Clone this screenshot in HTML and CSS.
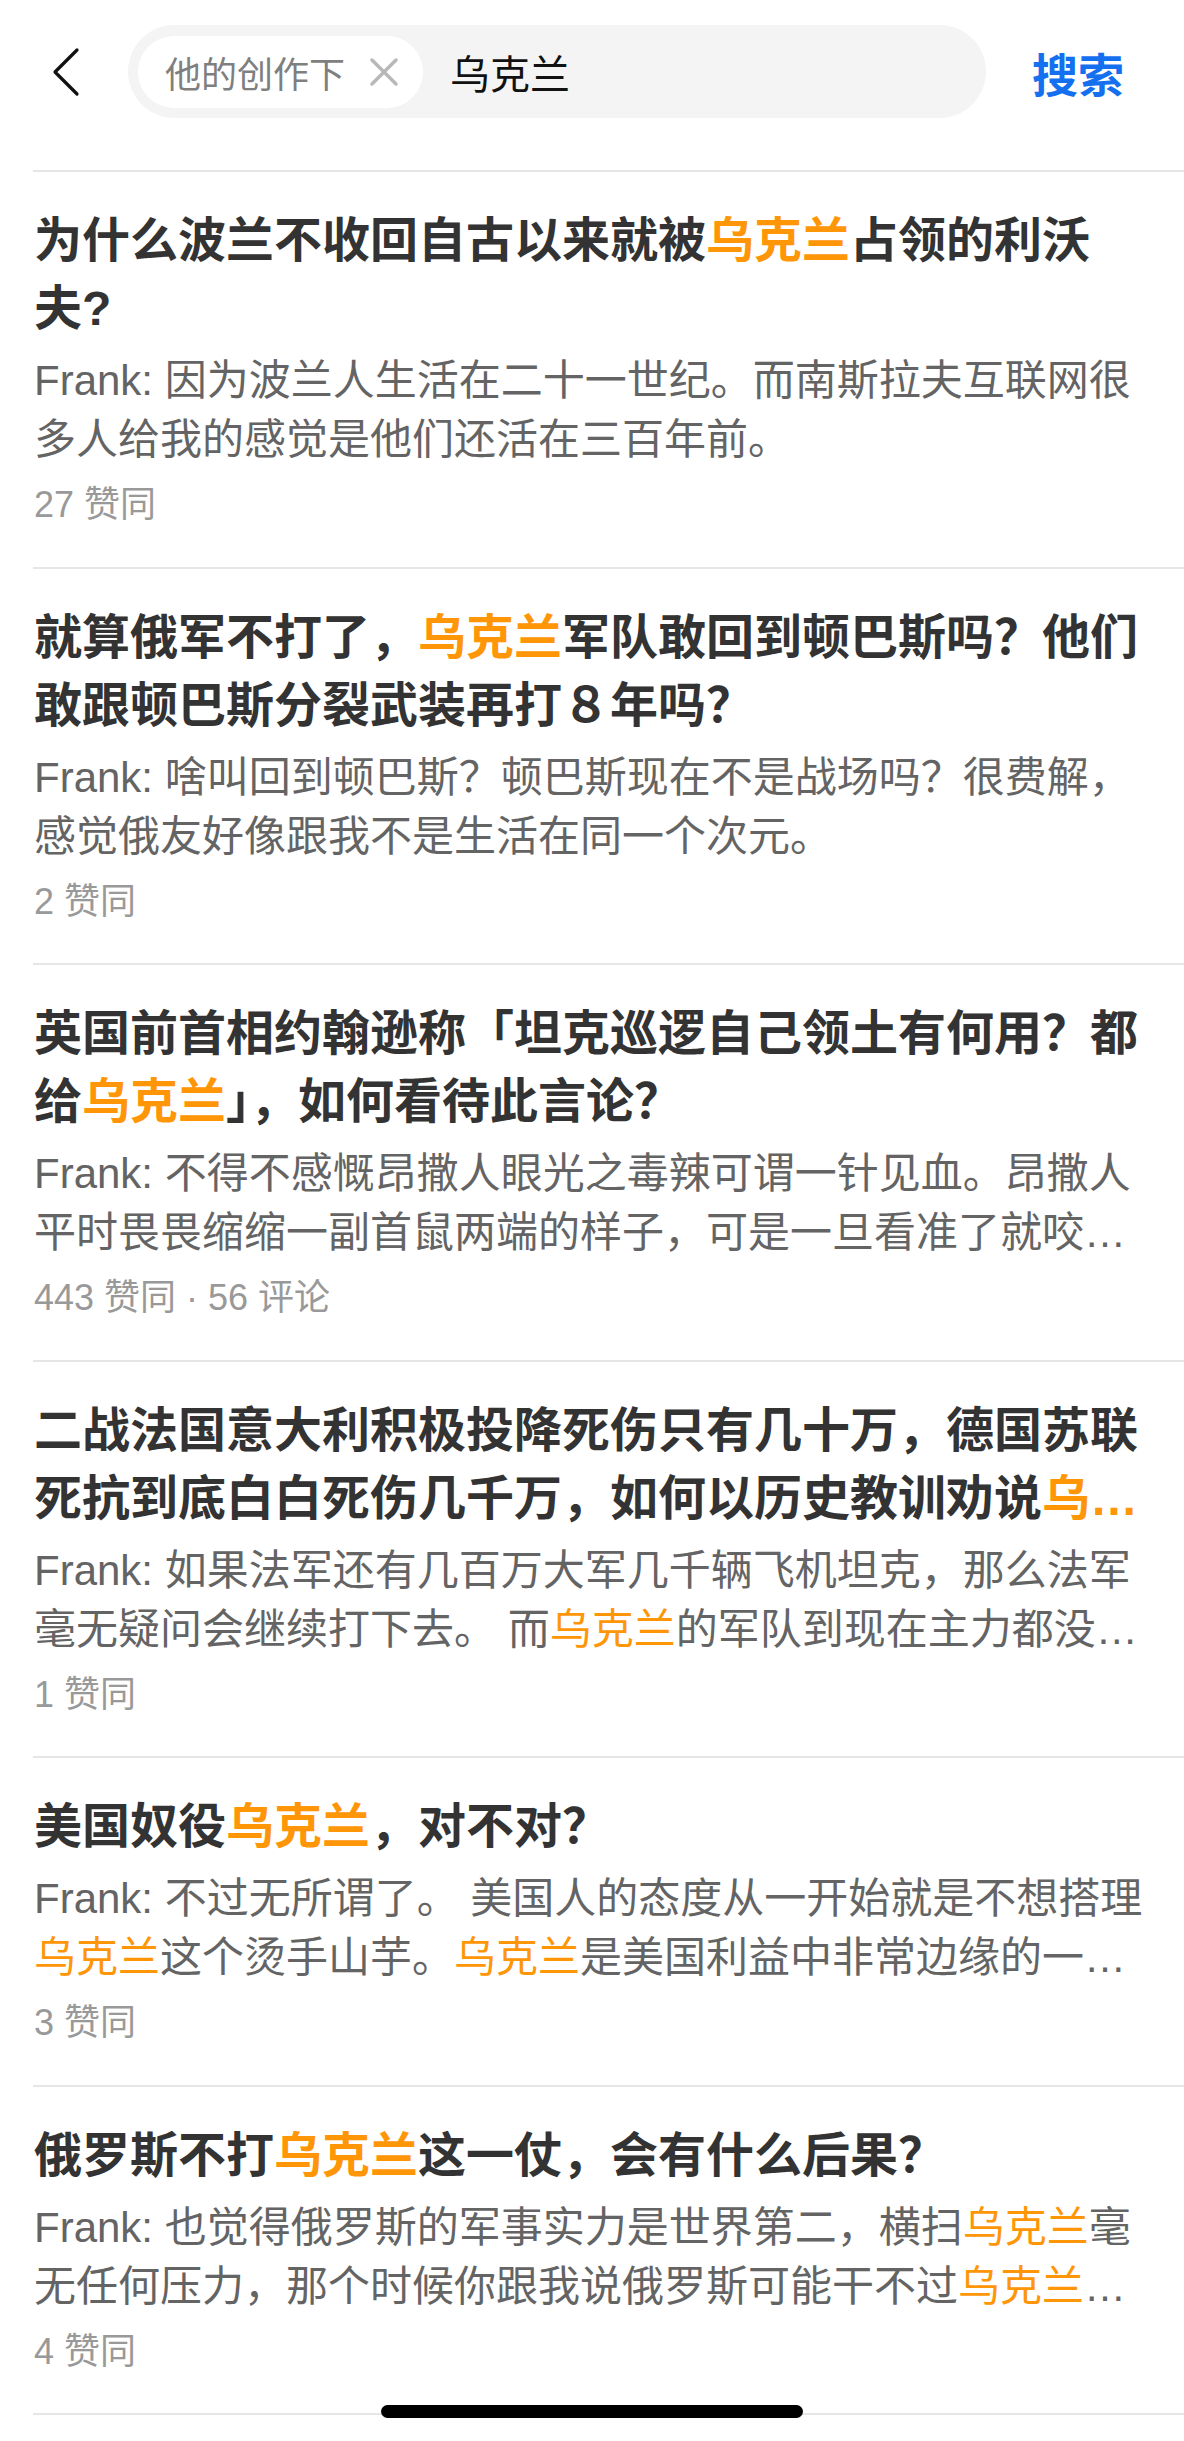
FILE: index.html
```html
<!DOCTYPE html>
<html lang="zh-CN">
<head>
<meta charset="utf-8">
<title>搜索</title>
<link rel="stylesheet" href="styles.css">
</head>
<body>
<div class="page">
  <header class="topbar">
    <div class="back">
      <svg width="28" height="50" viewBox="0 0 28 50"><path d="M25 3 L3 25 L25 47" fill="none" stroke="#111" stroke-width="3.2" stroke-linecap="round" stroke-linejoin="round"/></svg>
    </div>
    <div class="searchbox">
      <div class="chip">
        <span class="chip-text">他的创作下</span>
        <svg class="chip-x" width="28" height="28" viewBox="0 0 28 28"><path d="M2 2 L26 26 M26 2 L2 26" stroke="#b8b8b8" stroke-width="3.4" stroke-linecap="round"/></svg>
      </div>
      <span class="query">乌克兰</span>
    </div>
    <div class="search-btn">搜索</div>
  </header>

  <main class="list">
    <article class="item">
      <h2 class="title">为什么波兰不收回自古以来就被<span class="hl">乌克兰</span>占领的利沃夫?</h2>
      <p class="excerpt">Frank: 因为波兰人生活在二十一世纪。而南斯拉夫互联网很多人给我的感觉是他们还活在三百年前。</p>
      <div class="meta">27 赞同</div>
    </article>

    <article class="item">
      <h2 class="title">就算俄军不打了，<span class="hl">乌克兰</span>军队敢回到顿巴斯吗？他们敢跟顿巴斯分裂武装再打８年吗？</h2>
      <p class="excerpt">Frank: 啥叫回到顿巴斯？顿巴斯现在不是战场吗？很费解，感觉俄友好像跟我不是生活在同一个次元。</p>
      <div class="meta">2 赞同</div>
    </article>

    <article class="item">
      <h2 class="title">英国前首相约翰逊称「坦克巡逻自己领土有何用？都给<span class="hl">乌克兰</span>」，如何看待此言论？</h2>
      <p class="excerpt">Frank: 不得不感慨昂撒人眼光之毒辣可谓一针见血。昂撒人平时畏畏缩缩一副首鼠两端的样子，可是一旦看准了就咬…</p>
      <div class="meta">443 赞同 · 56 评论</div>
    </article>

    <article class="item">
      <h2 class="title">二战法国意大利积极投降死伤只有几十万，德国苏联死抗到底白白死伤几千万，如何以历史教训劝说<span class="hl">乌…</span></h2>
      <p class="excerpt">Frank: 如果法军还有几百万大军几千辆飞机坦克，那么法军毫无疑问会继续打下去。 而<span class="hl">乌克兰</span>的军队到现在主力都没…</p>
      <div class="meta">1 赞同</div>
    </article>

    <article class="item">
      <h2 class="title">美国奴役<span class="hl">乌克兰</span>，对不对？</h2>
      <p class="excerpt">Frank: 不过无所谓了。 美国人的态度从一开始就是不想搭理<span class="hl">乌克兰</span>这个烫手山芋。<span class="hl">乌克兰</span>是美国利益中非常边缘的一…</p>
      <div class="meta">3 赞同</div>
    </article>

    <article class="item">
      <h2 class="title">俄罗斯不打<span class="hl">乌克兰</span>这一仗，会有什么后果？</h2>
      <p class="excerpt">Frank: 也觉得俄罗斯的军事实力是世界第二，横扫<span class="hl">乌克兰</span>毫无任何压力，那个时候你跟我说俄罗斯可能干不过<span class="hl">乌克兰</span>…</p>
      <div class="meta">4 赞同</div>
    </article>

    <article class="item"></article>
  </main>

  <div class="home-indicator"></div>
</div>
</body>
</html>
```

FILE: styles.css
```css
html, body {
  margin: 0;
  padding: 0;
  background: #ffffff;
}

body {
  font-family: "Liberation Sans", "Noto Sans CJK SC", sans-serif;
  color: #333333;
}

.page {
  position: relative;
  width: 1184px;
  height: 2441px;
  overflow: hidden;
  background: #ffffff;
}

/* ---------- top bar ---------- */
.topbar {
  height: 170px;
  box-sizing: border-box;
  padding-top: 25px;
  display: flex;
  align-items: flex-start;
}

.back {
  width: 28px;
  height: 93px;
  margin-left: 52px;
  display: flex;
  align-items: center;
}

.back svg {
  display: block;
}

.searchbox {
  margin-left: 48px;
  width: 858px;
  height: 93px;
  border-radius: 47px;
  background: #f4f4f4;
  display: flex;
  align-items: center;
  box-sizing: border-box;
  padding-left: 10px;
}

.chip {
  height: 72px;
  border-radius: 36px;
  background: #ffffff;
  display: flex;
  align-items: center;
  box-sizing: border-box;
  padding: 0 25px 0 27px;
}

.chip-text {
  font-size: 36px;
  color: #7f7f7f;
  line-height: 1;
  font-family: "Noto Sans CJK SC", sans-serif;
}

.chip-x {
  display: block;
  margin-left: 25px;
}

.query {
  margin-left: 27px;
  font-size: 40px;
  line-height: 1;
  color: #111111;
  font-family: "Noto Sans CJK SC", sans-serif;
}

.search-btn {
  margin-left: 46px;
  height: 93px;
  display: flex;
  align-items: center;
  font-size: 46px;
  font-weight: 700;
  color: #1570ef;
  font-family: "Noto Sans CJK SC", sans-serif;
}

/* ---------- list ---------- */
.list {
  display: flex;
  flex-direction: column;
}

.item {
  margin-left: 33px;
  border-top: 2px solid #e6e6e6;
  padding: 35px 34px 35.5px 1px;
}

.title {
  margin: 0;
  font-size: 48px;
  line-height: 68px;
  font-weight: 700;
  color: #333333;
  display: -webkit-box;
  -webkit-box-orient: vertical;
  -webkit-line-clamp: 2;
  overflow: hidden;
}

.excerpt {
  margin: 8px 0 0 0;
  font-size: 42px;
  line-height: 59px;
  color: #646464;
  display: -webkit-box;
  -webkit-box-orient: vertical;
  -webkit-line-clamp: 2;
  overflow: hidden;
}

.hl {
  color: #ff9607;
}

.meta {
  margin-top: 10px;
  font-size: 36px;
  line-height: 52px;
  color: #999999;
}

/* ---------- home indicator (overlay) ---------- */
.home-indicator {
  position: absolute;
  left: 381px;
  bottom: 23px;
  width: 422px;
  height: 13px;
  border-radius: 7px;
  background: #000000;
}
```
